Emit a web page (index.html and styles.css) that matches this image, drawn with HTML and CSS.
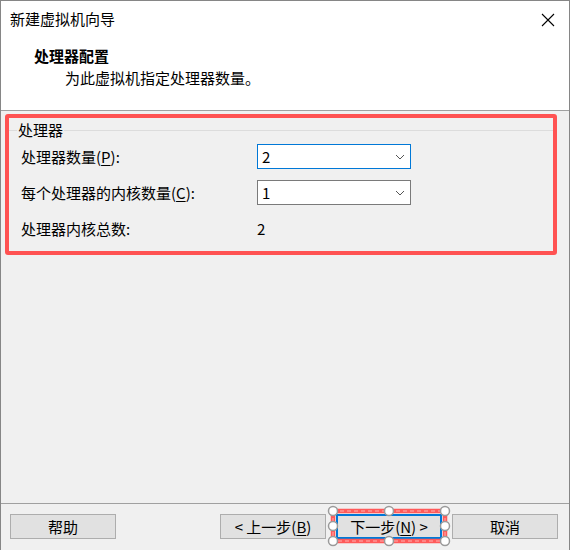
FILE: index.html
```html
<!DOCTYPE html>
<html lang="zh-CN">
  <head>
    <meta charset="UTF-8" />
    <title>新建虚拟机向导</title>
    <link rel="stylesheet" href="styles.css">
  </head>
  <body>
    <div class="window">
      <div class="top">
        <div class="titlebar">
          <span class="title">新建虚拟机向导</span>
          <svg class="close" width="14" height="14" viewBox="0 0 14 14">
            <path d="M1 1 L13 13 M13 1 L1 13" stroke="#000" stroke-width="1.1" fill="none" />
          </svg>
        </div>
        <div class="header">
          <h1>处理器配置</h1>
          <p>为此虚拟机指定处理器数量。</p>
        </div>
      </div>

      <div class="content">
        <div class="highlight">
          <div class="legend">处理器</div>
          <div class="rows">
            <div class="row">
              <span class="label">处理器数量(<u>P</u>):</span>
              <div class="select focus">
                <span>2</span>
                <svg width="10" height="6" viewBox="0 0 10 6"><path d="M1 1 L5 5 L9 1" stroke="#555" fill="none" /></svg>
              </div>
            </div>
            <div class="row">
              <span class="label">每个处理器的内核数量(<u>C</u>):</span>
              <div class="select">
                <span>1</span>
                <svg width="10" height="6" viewBox="0 0 10 6"><path d="M1 1 L5 5 L9 1" stroke="#555" fill="none" /></svg>
              </div>
            </div>
            <div class="row">
              <span class="label">处理器内核总数:</span>
              <span class="value">2</span>
            </div>
          </div>
        </div>
      </div>

      <div class="footer">
        <button class="btn">帮助</button>
        <div class="spacer"></div>
        <button class="btn">&lt; 上一步(<u>B</u>)</button>
        <div class="next-wrap">
          <button class="btn next">下一步(<u>N</u>) &gt;</button>
          <!-- selection handles drawn over the button -->
          <svg class="handles" width="126" height="44" viewBox="0 0 126 44">
            <rect x="7" y="7" width="112" height="30" fill="none" stroke="#ff5a5a" stroke-width="4.5" />
            <rect x="7" y="7" width="112" height="30" fill="none" stroke="#ffb0b0" stroke-width="1" stroke-dasharray="4 3" />
            <g fill="#fff" stroke="#9a9a9a" stroke-width="1.5">
              <circle cx="7" cy="7" r="4.5" />
              <circle cx="63" cy="7" r="4.5" />
              <circle cx="119" cy="7" r="4.5" />
              <circle cx="7" cy="22" r="4.5" />
              <circle cx="119" cy="22" r="4.5" />
              <circle cx="7" cy="37" r="4.5" />
              <circle cx="63" cy="37" r="4.5" />
              <circle cx="119" cy="37" r="4.5" />
            </g>
          </svg>
        </div>
        <button class="btn">取消</button>
      </div>
    </div>
  </body>
</html>
```

FILE: styles.css
```css
* {
  margin: 0;
  padding: 0;
  box-sizing: border-box;
}
body {
  font-family: 'Noto Sans CJK SC', 'Noto Sans', sans-serif;
  font-size: 15px;
  color: #000;
  background: #f0f0f0;
}
.window {
  height: 550px;
  display: flex;
  flex-direction: column;
  background: #f0f0f0;
  border: 1px solid #868686;
  border-bottom: none;
}
.top {
  height: 110px;
  background: #fff;
  border-bottom: 1px solid #a0a0a0;
}
.titlebar {
  height: 36px;
  display: flex;
  align-items: center;
  justify-content: space-between;
  padding: 0 14px 0 9px;
}
.title {
  line-height: 36px;
}
.close {
  margin-top: 1px;
}
.header {
  padding: 9px 0 0 33px;
}
.header h1 {
  font-size: 15px;
  font-weight: bold;
  line-height: 20px;
}
.header p {
  margin: 2px 0 0 31px;
  line-height: 20px;
}
.content {
  flex: 1;
  padding: 3px 12px 0 4px;
}
.highlight {
  height: 141px;
  border: 4px solid #ff5252;
  border-radius: 3px;
  padding-top: 2px;
}
.legend {
  display: flex;
  align-items: center;
  height: 20px;
  line-height: 20px;
}
.legend::before {
  content: '';
  width: 8px;
  height: 1px;
  margin-right: 1px;
  background: #dcdcdc;
}
.legend::after {
  content: '';
  flex: 1;
  height: 1px;
  margin-left: 1px;
  background: #dcdcdc;
}
.rows {
  margin-top: 4px;
  padding-left: 12px;
  display: flex;
  flex-direction: column;
  gap: 11px;
}
.row {
  height: 25px;
  display: flex;
  align-items: center;
}
.label {
  width: 236px;
}
u {
  text-decoration: underline;
  text-underline-offset: 2px;
}
.select {
  width: 154px;
  height: 25px;
  background: #fff;
  border: 1px solid #7a7a7a;
  display: flex;
  align-items: center;
  justify-content: space-between;
  padding: 0 5px 0 4px;
}
.select.focus {
  border-color: #0078d7;
}
.footer {
  height: 47px;
  border-top: 1px solid #a0a0a0;
  display: flex;
  align-items: flex-start;
  gap: 10px;
  padding: 10px 11px 0 9px;
}
.spacer {
  flex: 1;
}
.btn {
  width: 106px;
  height: 25px;
  background: #e1e1e1;
  border: 1px solid #adadad;
  font-family: inherit;
  font-size: 15px;
  color: #000;
}
.next-wrap {
  position: relative;
}
.next {
  border: 2px solid #0078d7;
}
.handles {
  position: absolute;
  left: -10px;
  top: -10px;
}
```
